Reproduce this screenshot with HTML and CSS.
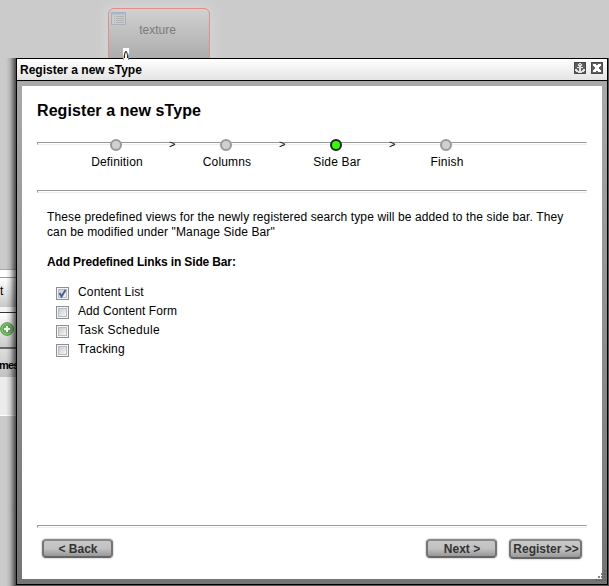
FILE: index.html
```html
<!DOCTYPE html>
<html lang="en">
<head>
<meta charset="utf-8">
<title>Register a new sType</title>
<link rel="stylesheet" href="styles.css">
</head>
<body>
<div class="canvas">
  <div class="node">
    <svg class="node-icon" width="15" height="14" viewBox="0 0 15 14"><rect x=".5" y=".5" width="14" height="12" fill="#ccc" stroke="#aab0b8"/><path d="M1 1.5h13" stroke="#a5b7cc" stroke-width="2"/><path d="M3 4.5h1M5 4.5h8M3 6.5h1M5 6.5h8M3 8.5h1M5 8.5h8M3 10.5h1M5 10.5h8" stroke="#b2b2b2"/></svg>
    <span>texture</span>
  </div>
</div>
<div class="behind">
  <div class="b-line"></div>
  <div class="b-tab">t</div>
  <div class="b-tools"><svg width="14" height="14" viewBox="0 0 14 14"><circle cx="7" cy="7" r="6.3" fill="#62ad55" stroke="#4b963f"/><circle cx="7" cy="7" r="5.2" fill="none" stroke="#91c985"/><path d="M7 4v6M4 7h6" stroke="#fff" stroke-width="2"/></svg></div>
  <div class="b-head">mes</div>
  <div class="b-body"></div>
</div>
<div class="shade-left"></div>
<div class="shade-right"></div>
<section class="dialog">
  <header class="titlebar">
    <span class="title">Register a new sType</span>
    <svg width="12" height="12" viewBox="0 0 12 12"><path d="M0 0h12v12H0z" fill="#606060"/><path d="M.5.5h11v11H.5z" fill="none" stroke="#484848"/><path d="M5 1h2v1h1v2H7v1h2v1H7v3h1V8h1V7h2v2h-1v1H8v1H4v-1H2V9H1V7h2v1h1v1h1V6H3V5h2V4H4V2h1z" fill="#e4e4e4"/><path d="M5.500 2h1v1h-1z" fill="#555"/></svg>
    <svg width="12" height="12" viewBox="0 0 12 12"><path d="M0 0h12v12H0z" fill="#606060"/><path d="M.5.5h11v11H.5z" fill="none" stroke="#484848"/><path d="M2 2h3v1h2V2h3v2H9v1H8v2h1v1h1v2H7V9H5v1H2V8h1V7h1V5H3V4H2z" fill="#fff"/></svg>
  </header>
  <div class="frame">
    <main class="panel">
      <h1>Register a new sType</h1>
      <div class="progress">
        <hr>
        <ol class="steps">
          <li><i class="dot"></i><b class="arrow">&gt;</b><span>Definition</span></li>
          <li><i class="dot"></i><b class="arrow">&gt;</b><span>Columns</span></li>
          <li><i class="dot on"></i><b class="arrow">&gt;</b><span>Side Bar</span></li>
          <li><i class="dot"></i><span>Finish</span></li>
        </ol>
      </div>
      <hr>
      <p class="intro">These predefined views for the newly registered search type will be added to the side bar. They<br>can be modified under "Manage Side Bar"</p>
      <h2>Add Predefined Links in Side Bar:</h2>
      <div class="options">
        <label><span class="box"><svg width="13" height="13" viewBox="0 0 13 13"><path d="M3.500 6 5.500 9.500 9.500 3" fill="none" stroke="#4560a0" stroke-width="2"/></svg></span><span>Content List</span></label>
        <label><span class="box"></span><span class="o2">Add Content Form</span></label>
        <label><span class="box"></span><span class="o3">Task Schedule</span></label>
        <label><span class="box"></span><span>Tracking</span></label>
      </div>
      <hr class="foot-line">
      <footer>
        <button class="back">&lt; Back</button>
        <button class="next">Next &gt;</button>
        <button class="reg">Register &gt;&gt;</button>
      </footer>
    </main>
    <svg class="grip" width="14" height="14" viewBox="0 0 14 14"><path d="M11 1h2M8 4h2M11 4h2M5 7h2M8 7h2M11 7h2M2 10h2M5 10h2M8 10h2M11 10h2" stroke="#606060" stroke-width="1.500"/></svg>
  </div>
</section>
<svg class="node-mark" width="6" height="12" viewBox="0 0 6 12"><path d="M0 0h6v12H0z" fill="#fff"/><path d="M.5 12V9.500L2 4" stroke="#f0a030" fill="none"/><path d="M1.500 10V7L2.500 3.500h1L4.500 7v3" stroke="#222" fill="none"/><path d="M5.500 12V8L4.500 5" stroke="#4a90e0" fill="none"/></svg>
</body>
</html>
```
FILE: styles.css
```css
* { box-sizing: border-box; }
body {
  margin: 0;
  width: 609px;
  height: 586px;
  overflow: hidden;
  position: relative;
  background: #cbcbcb;
  color: #000;
  font: 12px/15px "Liberation Sans", Arial, sans-serif;
}
.canvas { height: 269px; }
.node {
  position: absolute;
  left: 108px;
  top: 8px;
  width: 102px;
  height: 56px;
  border: 1px solid #e58b8b;
  border-radius: 6px;
  background: linear-gradient(#d1d1d1, #a9a9a9);
  box-shadow: 0 0 12px 3px #d6d6d6;
  color: #7b7b7b;
  text-align: center;
  padding: 14px 3px 0 0;
}
.node-icon { position: absolute; left: 2px; top: 3px; }
.node-mark { position: absolute; left: 123px; top: 48px; }
.behind { width: 17px; overflow: hidden; }
.b-line { height: 8px; background: #fff; border-top: 1px solid #aaa; }
.b-tab { height: 36px; padding-top: 6px; background: linear-gradient(#fff, #c9c9c9 85%, #f4f4f4 86%); border-top: 1px solid #999; border-bottom: 1px solid #333; }
.b-tools { height: 36px; padding-top: 9px; background: linear-gradient(#fff, #ccc); border-bottom: 2px solid #666; }
.b-tools svg { display: block; }
.b-head { height: 28px; padding-top: 9px; background: linear-gradient(#ddd, #c2c2c2); font-size: 11px; font-weight: bold; text-indent: -1px; letter-spacing: -.8px; }
.b-body { height: 39px; background: #ececec; border-bottom: 1px solid #fff; }
.shade-left { position: absolute; left: 6px; top: 58px; width: 10px; height: 528px; background: linear-gradient(90deg, transparent, rgba(0,0,0,.12) 40%, rgba(0,0,0,.65)); }
.shade-right { position: absolute; left: 16px; top: 58px; width: 593px; height: 528px; background: #555; }
.dialog {
  position: absolute;
  left: 16px;
  top: 58px;
  width: 592px;
  height: 527px;
  border: 1px solid #000;
  display: flex;
  flex-direction: column;
}
.titlebar {
  height: 22px;
  flex: none;
  display: flex;
  align-items: flex-start;
  gap: 5px;
  padding: 3px 4px 0 3px;
  background: linear-gradient(#fff, #e4e4e4);
  border-bottom: 1px solid #000;
  font-weight: bold;
}
.title { flex: 1; padding-top: 1px; }
.frame { flex: 1; padding: 5px; background: linear-gradient(#a9a9a9, #747474); position: relative; }
.panel { height: 493px; background: #fff; padding: 15px 15px 0; display: flex; flex-direction: column; }
h1 { margin: 0; font-size: 16px; line-height: 20px; letter-spacing: .08px; }
hr { margin: 0; width: 100%; height: 3px; flex: none; border: 1px solid; border-color: #999 #eee #eee #999; }
.progress { height: 69px; flex: none; padding-top: 21px; }
.steps { list-style: none; margin: -6px 0 0 24px; padding: 0; display: flex; }
.steps li { width: 110px; height: 32px; display: flex; flex-direction: column; align-items: center; position: relative; }
.dot { width: 12px; height: 12px; flex: none; border: 2px solid #999; border-radius: 50%; background: #d0d0d0; }
.dot.on { background: #3f0; border-color: #222; }
.arrow { position: absolute; left: 108px; top: 0; font: 11px/10px "Liberation Sans", Arial, sans-serif; }
.steps span { margin: 4px 0 0 2px; white-space: nowrap; letter-spacing: .17px; }
.intro { margin: 17px 0 0 10px; white-space: nowrap; letter-spacing: .115px; }
h2 { margin: 15px 0 0 10px; font-size: 12px; line-height: 15px; letter-spacing: -.14px; }
.options { margin: 15px 0 0 19px; letter-spacing: .15px; }
.options label { display: flex; height: 19px; gap: 9px; }
.o2 { letter-spacing: .06px; }
.o3 { letter-spacing: .3px; }
.box { width: 13px; height: 13px; margin-top: 2px; border: 1px solid #8e8f8f; background: linear-gradient(135deg, #c8ccd2, #f6f6f6) content-box, #f4f4f4; padding: 2px; box-shadow: inset 0 0 0 1px #f4f4f4, inset 0 0 0 2px #b9bcc2; }
.box svg { display: block; margin: -3px; }
.foot-line { margin-top: auto; }
footer { height: 51px; flex: none; display: flex; padding: 11px 5px 0 5px; }
button {
  height: 19px;
  padding: 1px 0 0 1px;
  border: 2px solid #747474;
  border-top-color: #888;
  border-bottom-color: #666;
  border-radius: 4px;
  background: linear-gradient(#c8c8c8, #c1c1c1 50%, #989898);
  box-shadow: 0 0 2px #999;
  color: #333;
  font: bold 12px/15px "Liberation Sans", Arial, sans-serif;
  white-space: nowrap;
}
.back { width: 71px; }
.next { width: 71px; margin-left: auto; }
.reg { width: 73px; height: 20px; margin-left: 12px; padding-top: 0; }
.grip { position: absolute; right: 0; bottom: 0; }
```
